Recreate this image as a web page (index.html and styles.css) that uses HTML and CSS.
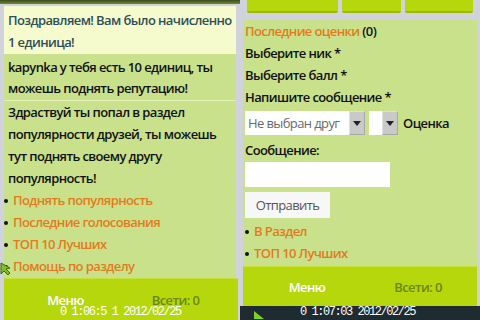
FILE: index.html
```html
<!DOCTYPE html>
<html lang="ru">
<head>
<meta charset="utf-8">
<link rel="stylesheet" href="styles.css">
</head>
<body>
<div class="screen left">
  <div class="topstrip"></div>
  <div class="content">
    <div class="notice">Поздравляем! Вам было начисленно<br>1 единица!</div>
    <div class="para first">kapynka у тебя есть 10 единиц, ты<br>можешь поднять репутацию!</div>
    <div class="para">Здраствуй ты попал в раздел<br>популярности друзей, ты можешь<br>тут поднять своему другу<br>популярность!</div>
    <ul class="links">
      <li><a>Поднять популярность</a></li>
      <li><a>Последние голосования</a></li>
      <li><a>ТОП 10 Лучших</a></li>
      <li><a>Помощь по разделу</a></li>
    </ul>
  </div>
  <div class="softbar tall">
    <span class="sk-left">Меню</span>
    <span class="sk-right">Всети: 0</span>
  </div>
  <div class="stamp">0 1:06:5 1 2012/02/25</div>
  <svg class="cursor" width="12" height="14" viewBox="0 0 12 14"><path d="M1 1 L1 12 L4 9 L8 13 L10 11 L6 7 L10 6 Z" fill="#7fc020" stroke="#3d6a10" stroke-width="1"/></svg>
</div>
<div class="screen right">
  <div class="tabs">
    <div class="tab t1"></div>
    <div class="tab t2"></div>
    <div class="tab t3"></div>
  </div>
  <div class="content rc">
    <div class="line"><a>Последние оценки</a> (0)</div>
    <div class="line">Выберите ник *</div>
    <div class="line">Выберите балл *</div>
    <div class="line">Напишите сообщение *</div>
    <div class="selrow">
      <div class="select wide"><span class="val">Не выбран друг</span><span class="arrow"></span></div>
      <div class="select small"><span class="val"></span><span class="arrow"></span></div>
      <span class="sellabel">Оценка</span>
    </div>
    <div class="line">Сообщение:</div>
    <div class="input"></div>
    <div class="button">Отправить</div>
    <ul class="links">
      <li><a>В Раздел</a></li>
      <li><a>ТОП 10 Лучших</a></li>
    </ul>
  </div>
  <div class="softbar">
    <span class="sk-left">Меню</span>
    <span class="sk-right">Всети: 0</span>
  </div>
  <div class="darkstrip"></div>
  <div class="stamp">0 1:07:03 2012/02/25</div>
  <svg class="cursor2" width="12" height="10" viewBox="0 0 12 10"><path d="M1 1 L11 9 L1 9 Z" fill="#7fd020"/></svg>
</div>
</body>
</html>
```
FILE: styles.css
```css
* { box-sizing: border-box; }
html, body { margin: 0; padding: 0; }
body {
  width: 480px;
  height: 320px;
  overflow: hidden;
  display: flex;
  font-family: "Open Sans", "DejaVu Sans", sans-serif;
  font-size: 13px;
  font-weight: 600;
  letter-spacing: -0.6px;
  color: #111;
  background: #d0d3da;
  white-space: nowrap;
}
.screen {
  position: relative;
  width: 240px;
  height: 320px;
  display: flex;
  flex-direction: column;
  background: #d0d2dc;
  overflow: hidden;
}
.topstrip {
  height: 4px;
  flex: none;
  background: linear-gradient(#3e4a22, #6e8a28);
  margin: 0 0 2px 0;
}
.content {
  margin: 0 4px;
  background: #c9e18b;
  flex: 1;
}
.notice {
  background: #f6fbcd;
  color: #2f4e5a;
  line-height: 22px;
  padding: 3px 4px 1px 4px;
}
.para {
  line-height: 22px;
  padding: 0 4px;
}
.para.first {
  padding-top: 3px;
  line-height: 21px;
  border-bottom: 1px solid #e4f0b8;
  padding-bottom: 1px;
}
.links {
  list-style: none;
  margin: 0;
  padding: 0;
}
.links li {
  line-height: 22px;
  padding-left: 9px;
  position: relative;
}
.links li::before {
  content: "";
  position: absolute;
  left: 0;
  top: 10px;
  width: 4px;
  height: 4px;
  border-radius: 50%;
  background: #111;
}
a { color: #e27b1e; }
.softbar {
  background: #b6d70c;
  display: flex;
  align-items: center;
  flex: none;
  height: 40px;
  margin: 0 3px;
  border-top: 1px solid #c6e23a;
}
.left .softbar { margin: 0 2px 0 4px; height: 42px; align-items: flex-start; padding-top: 12px; }
.sk-left {
  color: #fff;
  width: 120px;
  text-align: center;
  padding-left: 8px;
}
.sk-right {
  color: #6c8712;
  width: 110px;
  text-align: center;
}
.left .sk-left { width: 118px; padding-left: 6px; }
.left .sk-right { width: 118px; padding-left: 0; padding-right: 8px; }
.stamp {
  position: absolute;
  left: 60px;
  bottom: 1px;
  color: #fff;
  font-family: "Liberation Mono", monospace;
  font-size: 12px;
  font-weight: 400;
  letter-spacing: -1.45px;
  line-height: 13px;
}
.cursor { position: absolute; left: 0; top: 262px; }
.cursor2 { position: absolute; left: 13px; top: 310px; }
/* right screen */
.tabs {
  display: flex;
  flex: none;
  gap: 4px;
  padding-left: 7px;
  height: 13px;
  margin-bottom: 7px;
}
.tab {
  background: #b6d70c;
  border-bottom: 2px solid #9cb80a;
  border-radius: 0 0 2px 2px;
}
.t1 { width: 91px; }
.t2 { width: 59px; }
.t3 { width: 68px; }
.rc {
  margin: 0 3px;
  padding: 0 2px;
  flex: none;
  height: 246px;
}
.line { line-height: 22px; }
.selrow {
  display: flex;
  align-items: center;
  height: 24px;
  margin: 3px 0 4px 0;
}
.select {
  display: flex;
  height: 24px;
  background: #fff;
}
.select.wide { width: 120px; }
.select.small { width: 29px; margin-left: 4px; }
.select .val {
  flex: 1;
  color: #6a6a6a;
  font-weight: 500;
  line-height: 24px;
  padding-left: 3px;
  overflow: hidden;
}
.select .arrow {
  width: 16px;
  flex: none;
  background: #c9c9c9;
  border: 1px solid #a8a8a8;
  border-top-color: #e0e0e0;
  border-left-color: #e0e0e0;
  position: relative;
}
.select .arrow::after {
  content: "";
  position: absolute;
  left: 3px;
  top: 9px;
  border-left: 4px solid transparent;
  border-right: 4px solid transparent;
  border-top: 5px solid #222;
}
.sellabel { margin-left: 5px; }
.input {
  width: 145px;
  height: 25px;
  background: #fff;
  margin-top: 1px;
}
.button {
  width: 85px;
  height: 26px;
  background: #f7f7f7;
  color: #555;
  font-weight: 500;
  line-height: 26px;
  text-align: center;
  margin-top: 5px;
  margin-bottom: 2px;
}
.darkstrip {
  flex: 1;
  background: #1e2c32;
}
```
